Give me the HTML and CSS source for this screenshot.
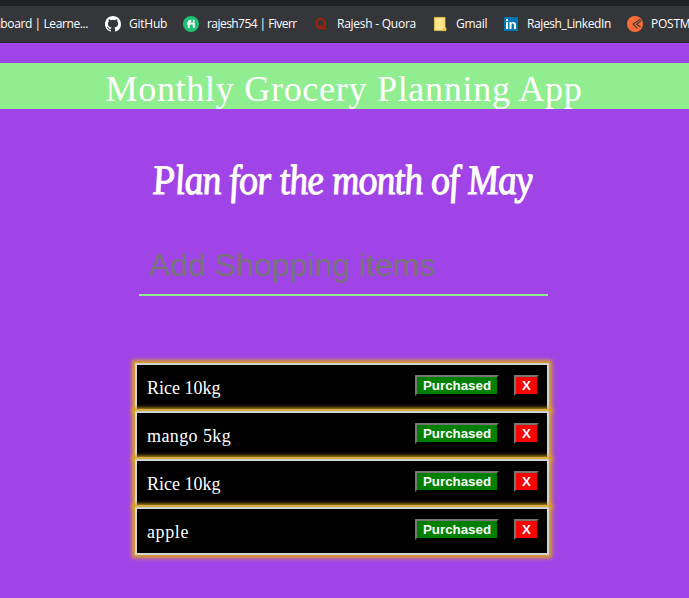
FILE: index.html
```
<!DOCTYPE html>
<html lang="en">
<head>
<meta charset="utf-8">
<title>Monthly Grocery Planning App</title>
<link rel="stylesheet" href="styles.css">
</head>
<body>
<nav class="bookmarks">
  <div class="bookmark first"><span>Dashboard | Learne...</span></div>
  <div class="bookmark"><svg viewBox="0 0 16 16"><path fill="#fff" d="M8 0C3.58 0 0 3.58 0 8c0 3.54 2.29 6.53 5.47 7.59.4.07.55-.17.55-.38 0-.19-.01-.82-.01-1.49-2.01.37-2.53-.49-2.69-.94-.09-.23-.48-.94-.82-1.13-.28-.15-.68-.52-.01-.53.63-.01 1.08.58 1.23.82.72 1.21 1.87.87 2.33.66.07-.52.28-.87.51-1.07-1.78-.2-3.64-.89-3.64-3.95 0-.87.31-1.59.82-2.15-.08-.2-.36-1.02.08-2.12 0 0 .67-.21 2.2.82a7.7 7.7 0 0 1 4 0c1.53-1.04 2.2-.82 2.2-.82.44 1.1.16 1.92.08 2.12.51.56.82 1.27.82 2.15 0 3.07-1.87 3.75-3.65 3.95.29.25.54.73.54 1.48 0 1.07-.01 1.93-.01 2.2 0 .21.15.46.55.38A8 8 0 0 0 16 8c0-4.42-3.58-8-8-8Z"/></svg><span class="github">GitHub</span></div>
  <div class="bookmark"><svg viewBox="0 0 16 16"><circle cx="8" cy="8" r="8" fill="#1dbf73"/><path fill="none" stroke="#fff" stroke-width="2" d="M5.8 12V6.3Q5.8 4.6 8.2 4.7M4 7.4H10.8V12"/><circle cx="10.8" cy="4.9" r="1.1" fill="#fff"/></svg><span class="fiverr">rajesh754 | Fiverr</span></div>
  <div class="bookmark"><svg viewBox="0 0 16 16"><ellipse cx="7.7" cy="7.4" rx="4.4" ry="4.7" fill="none" stroke="#a82000" stroke-width="2"/><path fill="none" stroke="#a82000" stroke-width="1.5" d="M6 10Q8 8.8 9.4 11.3T13.2 12"/></svg><span class="quora">Rajesh - Quora</span></div>
  <div class="bookmark"><svg viewBox="0 0 16 16"><path fill="#ffe68c" stroke="#e8c54c" stroke-width=".8" d="M2.4 1.4H13V11L14 12V14.6H2.4Z"/><path fill="#e8c54c" d="M11 12H14V15H11Z"/></svg><span class="gmail">Gmail</span></div>
  <div class="bookmark"><svg viewBox="0 0 16 16"><path fill="#0077b5" d="M1 1H15V15H1Z"/><path fill="#fff" d="M3 6H5V13H3ZM3 3H5V5H3ZM6.5 6H8.4V7C9.7 5.3 13 5.5 13 8.6V13H11V9C11 7 8.5 7 8.5 9V13H6.5Z"/></svg><span class="linkedin">Rajesh_LinkedIn</span></div>
  <div class="bookmark"><svg viewBox="0 0 16 16"><circle cx="8" cy="8" r="8" fill="#ff6c37"/><path fill="none" stroke="#35363a" stroke-width="1.1" d="M13.4 3.2L6 8L10.5 12.6M14.4 4.6L9.6 8.2L13.6 11"/></svg><span class="postman">POSTMAN</span></div>
</nav>
<header class="banner"><h1>Monthly Grocery Planning App</h1></header>
<main class="planner">
  <h2><span>Plan for the month of May</span></h2>
  <input class="item-input" type="text" placeholder="Add Shopping items" aria-label="Add Shopping items">
  <ul class="items">
    <li><span class="name rice">Rice 10kg</span><button class="purchased">Purchased</button><button class="remove">X</button></li>
    <li><span class="name mango">mango 5kg</span><button class="purchased">Purchased</button><button class="remove">X</button></li>
    <li><span class="name rice">Rice 10kg</span><button class="purchased">Purchased</button><button class="remove">X</button></li>
    <li><span class="name apple">apple</span><button class="purchased">Purchased</button><button class="remove">X</button></li>
  </ul>
</main>
</body>
</html>
```
FILE: styles.css
```
* { box-sizing: border-box; }
body {
  margin: 0;
  height: 598px;
  overflow: hidden;
  background: #a044e8;
  color: #fff;
  font-family: "Liberation Serif", serif;
}
.bookmarks {
  display: grid;
  grid-template-columns: 105px 78px 130px 119px 71px 124px 62px;
  height: 43px;
  border-top: 6px solid #202124;
  border-bottom: 1px solid #292a2d;
  background: #35363a;
  overflow: hidden;
  font: 12px/16px "Open Sans", "Noto Sans", sans-serif;
}
.bookmark {
  display: flex;
  align-items: center;
  gap: 8px;
  min-width: 0;
  white-space: nowrap;
}
.bookmark svg { width: 16px; height: 16px; flex: none; }
.first { justify-content: flex-end; padding-right: 17px; letter-spacing: -0.4px; }
.github, .quora, .gmail, .postman { letter-spacing: -0.25px; }
.fiverr { letter-spacing: -0.55px; }
.linkedin { letter-spacing: -0.4px; }
.banner {
  margin-top: 20px;
  height: 46px;
  background: #90ee90;
  text-align: center;
}
h1 {
  margin: 0;
  padding-right: 1px;
  font-size: 36px;
  font-weight: 400;
  line-height: 52px;
  letter-spacing: 0.72px;
  white-space: nowrap;
}
.planner { width: 414px; margin: 0 auto 0 135px; }
h2 {
  display: flex;
  justify-content: center;
  margin: 45px 0 0;
  height: 52px;
  font-size: 42px;
  font-weight: 400;
  line-height: 52px;
  font-style: italic;
  white-space: nowrap;
}
h2 span {
  flex: none;
  transform: scaleX(0.9) skewX(6deg);
  letter-spacing: -0.9px;
  -webkit-text-stroke: 1px #fff;
}
.item-input {
  display: block;
  width: 409px;
  height: 60px;
  margin: 30px 0 0 4px;
  padding: 0 10px;
  border: 0;
  border-bottom: 2px solid #90ee90;
  outline: 0;
  background: transparent;
  font: 32px "Liberation Sans", sans-serif;
}
.item-input::placeholder { color: #757575; }
.items { list-style: none; margin: 67px 0 0; padding: 0; }
.items li {
  display: flex;
  align-items: flex-start;
  height: 48px;
  padding: 10px 8px 0 10px;
  border: 2px solid lightgray;
  background: #000;
  box-shadow: 0 0 4px 3px goldenrod;
}
.name { flex: 1; font-size: 18px; line-height: 27px; white-space: nowrap; }
.mango { letter-spacing: 0.4px; }
.apple { letter-spacing: 0.6px; }
button {
  height: 21px;
  padding: 0;
  border: 2px outset #767676;
  border-color: #767676 #212121 #212121 #767676;
  color: #fff;
  font: bold 13.333px/15px "Liberation Sans", sans-serif;
}
.purchased { width: 84px; margin-right: 15px; background: green; }
.remove { width: 25px; background: red; }
```
